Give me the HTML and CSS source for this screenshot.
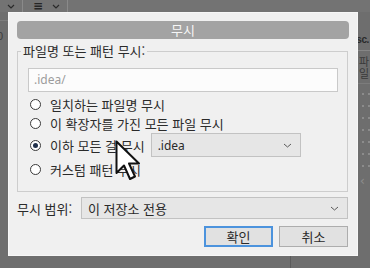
FILE: index.html
```html
<!DOCTYPE html>
<html lang="ko">
<head>
<meta charset="utf-8">
<link rel="stylesheet" href="styles.css">
</head>
<body>
<div class="desk">
  <div class="topbar">
    <span class="tb-item tb-chev"><svg width="8" height="5" viewBox="0 0 8 5"><polyline points="1,1 4,4 7,1" /></svg></span>
    <span class="tb-sep"></span>
    <span class="tb-item tb-menu">≡</span>
    <span class="tb-item tb-chev"><svg width="8" height="5" viewBox="0 0 8 5"><polyline points="1,1 4,4 7,1" /></svg></span>
    <span class="tb-sep"></span>
  </div>
  <div class="main">
    <div class="left-stub"><span class="stub-num">0</span></div>
    <div class="right-panel">
      <span class="rp-text">desc.</span>
      <span class="rp-text rp-ko">파일</span>
      <span class="rp-dots"></span>
      <span class="rp-arrow">‹</span>
    </div>
  </div>
  <div class="bottom-strip"><span class="bs-line"></span></div>
</div>

<div class="dialog">
  <div class="titlebar">무시</div>
  <fieldset class="group">
    <legend>파일명 또는 패턴 무시:</legend>
    <div class="textbox">.idea/</div>
    <div class="options">
      <div class="opt"><span class="radio"></span><span class="opt-label">일치하는 파일명 무시</span></div>
      <div class="opt"><span class="radio"></span><span class="opt-label">이 확장자를 가진 모든 파일 무시</span></div>
      <div class="opt opt-tall"><span class="radio checked"></span><span class="opt-label">이하 모든 걸 무시</span>
        <div class="select select-small"><span class="sel-text">.idea</span><svg class="chev" width="9" height="5" viewBox="0 0 9 5"><polyline points="1,1 4.5,4 8,1" /></svg></div>
      </div>
      <div class="opt"><span class="radio"></span><span class="opt-label">커스텀 패턴 무시</span></div>
    </div>
  </fieldset>
  <div class="scope-row">
    <span class="scope-label">무시 범위:</span>
    <div class="select select-wide"><span class="sel-text ko">이 저장소 전용</span><svg class="chev" width="9" height="5" viewBox="0 0 9 5"><polyline points="1,1 4.5,4 8,1" /></svg></div>
  </div>
  <div class="buttons">
    <button class="btn btn-default">확인</button>
    <button class="btn">취소</button>
  </div>
</div>

<svg class="cursor" width="28" height="42" viewBox="0 0 28 42">
  <polygon points="1.5,1.5 1.5,33 9,25.5 15,39 20,36.5 14,23.5 24,23.5" fill="#ffffff" stroke="#111111" stroke-width="2" stroke-linejoin="round"/>
</svg>
</body>
</html>
```

FILE: styles.css
```css
* { box-sizing: border-box; }

body {
  margin: 0;
  width: 370px;
  height: 268px;
  overflow: hidden;
  position: relative;
  background: #6e6e6e;
  font-family: "Noto Sans CJK KR", sans-serif;
  color: #2a2a2a;
}

/* background application */
.desk {
  display: flex;
  flex-direction: column;
  height: 268px;
}
.topbar {
  height: 12px;
  display: flex;
  align-items: center;
  background: #737373;
  padding-left: 6px;
}
.tb-item {
  display: flex;
  align-items: center;
  justify-content: center;
  color: #262626;
}
.tb-chev svg polyline { fill: none; stroke: #2a2a2a; stroke-width: 1.2; }
.tb-chev { width: 10px; }
.tb-menu {
  font-family: "DejaVu Sans", sans-serif;
  font-size: 12px;
  line-height: 12px;
  width: 14px;
  margin-left: 8px;
  margin-right: 6px;
  font-weight: bold;
}
.tb-sep {
  width: 1px;
  height: 12px;
  background: #8a8a8a;
  margin-left: 6px;
}
.main {
  flex: 1;
  display: flex;
  justify-content: space-between;
}
.left-stub {
  width: 8px;
  border-top: 1px solid #7e7e7e;
  margin-top: 8px;
  overflow: hidden;
}
.stub-num {
  display: block;
  font-family: "Liberation Sans", sans-serif;
  font-size: 11px;
  color: #3c3c3c;
  margin-top: 9px;
  margin-left: -3px;
}
.right-panel {
  width: 40px;
  display: flex;
  flex-direction: column;
  align-items: stretch;
  padding-top: 22px;
  overflow: hidden;
}
.rp-text {
  font-family: "Liberation Sans", sans-serif;
  font-size: 10px;
  font-weight: bold;
  letter-spacing: -0.4px;
  color: #2a2a2a;
  line-height: 12px;
  padding: 0 1px 4px 0;
  text-align: right;
  border-bottom: 1px solid #868686;
}
.rp-ko {
  font-family: "Noto Sans CJK KR", sans-serif;
  font-size: 11px;
  letter-spacing: 0;
  font-weight: normal;
  color: #3a3a3a;
  text-align: left;
  padding: 4px 0 4px 29px;
  border-bottom: 1px solid #7c7c7c;
}
.rp-dots {
  height: 82px;
  margin-top: 4px;
  background-image: radial-gradient(circle, #8c8c8c 0.8px, transparent 1px);
  background-size: 6px 12px;
}
.rp-arrow {
  font-family: "DejaVu Sans", sans-serif;
  font-size: 12px;
  color: #8f8f8f;
  padding-left: 30px;
  margin-top: 4px;
}
.bottom-strip {
  height: 12px;
  display: flex;
  padding-left: 290px;
}
.bs-line {
  width: 1px;
  background: #5b5b5b;
}

/* dialog */
.dialog {
  position: absolute;
  left: 8px;
  top: 12px;
  width: 350px;
  height: 244px;
  background: #f0f0f0;
  border: 1px solid #f7f7f7;
  padding: 8px 8px 0 8px;
  display: flex;
  flex-direction: column;
}
.titlebar {
  height: 18px;
  border-radius: 4px;
  background: #a3a3a3;
  color: #f6f6f6;
  font-size: 13px;
  line-height: 18px;
  text-align: center;
}
.group {
  margin: 4px 1px 0 0;
  padding: 9px 9px 13px 10px;
  border: 1px solid #cdcdcd;
  min-inline-size: 0;
}
.group legend {
  font-size: 13px;
  line-height: 16px;
  padding: 0 2px;
  margin-left: -7px;
  color: #2a2a2a;
}
.textbox {
  height: 24px;
  border: 1px solid #c9c9c9;
  background: #fcfcfc;
  font-family: "Noto Sans", sans-serif;
  font-size: 12px;
  line-height: 22px;
  color: #9c9c9c;
  padding-left: 5px;
}
.options {
  display: flex;
  flex-direction: column;
  gap: 1px;
  margin-top: 3px;
}
.opt {
  height: 18px;
  display: flex;
  align-items: center;
  font-size: 13px;
}
.opt-tall { height: 24px; margin-bottom: 2px; }
.radio {
  width: 11px;
  height: 11px;
  border-radius: 50%;
  border: 1px solid #3a3a3a;
  background: #fff;
  margin-left: 2px;
  display: flex;
  align-items: center;
  justify-content: center;
  flex: none;
}
.radio.checked::after {
  content: "";
  width: 5px;
  height: 5px;
  border-radius: 50%;
  background: #1f2f4a;
}
.opt-label {
  margin-left: 9px;
  white-space: nowrap;
}
.select {
  display: flex;
  align-items: center;
  justify-content: space-between;
  background: #e6e6e6;
  border: 1px solid #c2c2c2;
  padding: 0 8px 0 6px;
}
.select .chev polyline { fill: none; stroke: #5a5a5a; stroke-width: 1; }
.select-small {
  width: 150px;
  height: 24px;
  margin-left: 6px;
}
.sel-text {
  font-family: "Noto Sans", sans-serif;
  font-size: 12px;
  color: #2a2a2a;
}
.sel-text.ko {
  font-family: "Noto Sans CJK KR", sans-serif;
  font-size: 13px;
}
.scope-row {
  display: flex;
  align-items: center;
  margin: 5px 1px 0 0;
}
.scope-label {
  width: 64px;
  font-size: 13px;
}
.select-wide {
  flex: 1;
  height: 22px;
}
.buttons {
  display: flex;
  justify-content: flex-end;
  gap: 6px;
  margin: 7px 1px 0 0;
}
.btn {
  width: 69px;
  height: 21px;
  padding: 0;
  background: #e1e1e1;
  border: 1px solid #adadad;
  font-family: "Noto Sans CJK KR", sans-serif;
  font-size: 13px;
  line-height: 17px;
  color: #2a2a2a;
}
.btn-default {
  border: 2px solid #4c93dd;
}

.cursor {
  position: absolute;
  left: 115px;
  top: 140px;
}
```
